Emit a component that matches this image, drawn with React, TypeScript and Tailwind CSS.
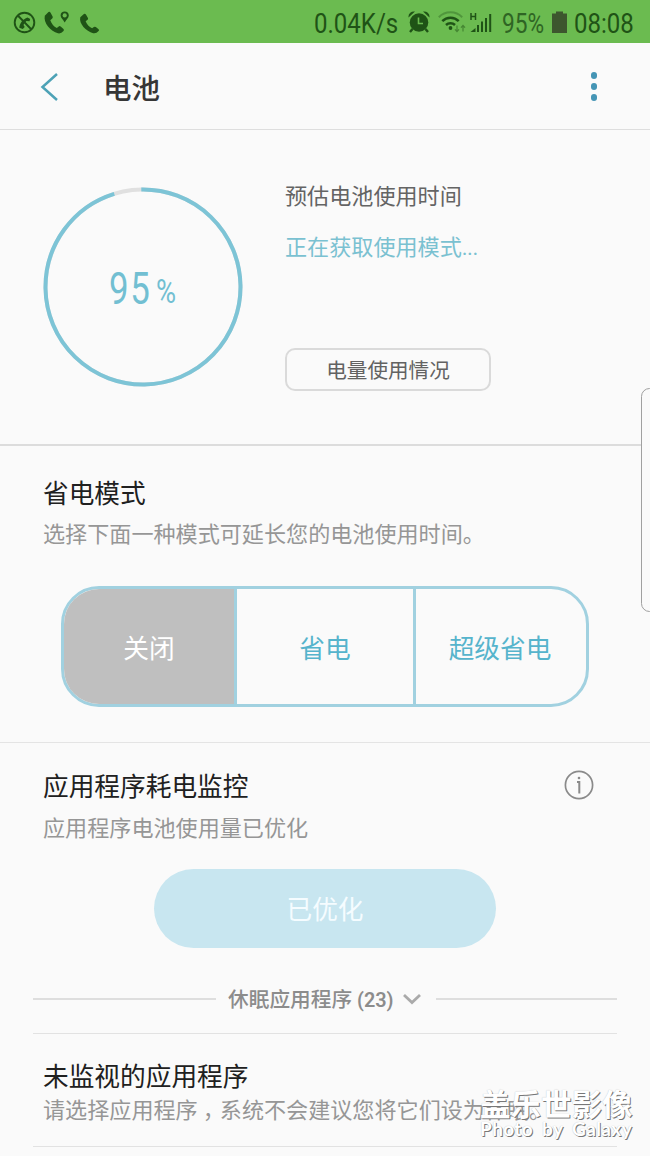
import type { ReactNode } from "react";

const handset =
  "M.8 4.200 4.600.600Q5.800-.2 6.700 1.200L8.800 4.900Q9.300 6 8.400 6.800L6.400 8.500C7.800 12 10 14.600 13.100 16.100L15 14.600Q16 13.900 17 14.700L19.900 17.100Q20.800 18.100 19.900 19.100 17.500 22 14.300 21.400C6.800 19.800-.8 11 .8 4.200z";

function StatusBar() {
  return (
    <div className="flex h-[43px] items-center bg-[#6bbb50] pl-[13px] pr-4 text-[#1f5316]">
      {/* Notifications */}
      <svg className="h-6 w-[88px] shrink-0" viewBox="0 0 88 24" fill="currentColor">
        <circle cx="11.500" cy="12.500" r="9.800" fill="none" stroke="currentColor" strokeWidth="1.900" />
        <path d="M4.800 5.500 18.500 19.500" stroke="currentColor" strokeWidth="1.900" />
        <path d="M6.300 17.800c.4-4.600 3.500-8.600 8.200-10.300l2.700 1.500-.7 2.200-3-.2c-1.500 1.100-2.500 2.500-3 4.100l1.200 2-1.900 2z" />
        <path d={handset} transform="translate(31 1.500) scale(.98 1.020)" />
        <path d="M51.700 1.500c2.400 0 4.100 1.600 4.100 3.900 0 2.400-2.600 4.200-4.100 7-1.500-2.800-4.100-4.600-4.100-7 0-2.300 1.700-3.900 4.100-3.900z" />
        <circle cx="51.700" cy="5.400" r="2.100" fill="#6bbb50" />
        <path d={handset} transform="translate(66.500 3.500) scale(.96 .92)" />
      </svg>

      <div className="ml-auto flex items-center text-[27px] leading-[43px]">
        <div className="mt-[5px] w-[84px] whitespace-nowrap">
          <span className="inline-block origin-left scale-x-[0.89]">0.04K/s</span>
        </div>
        <svg className="ml-[10px] h-6 w-[22px]" viewBox="0 0 22 24" fill="currentColor">
          <circle cx="11" cy="12.500" r="9.300" />
          <path d="M.5 7.500a5.500 5.500 0 0 1 6.500-6zM21.500 7.500a5.500 5.500 0 0 0-6.500-6z" />
          <path d="m4.500 19-2.500 3M17.500 19l2.500 3" stroke="currentColor" strokeWidth="2.400" />
          <path d="M10.500 7.500v6h4.500" fill="none" stroke="#6bbb50" strokeWidth="1.600" />
        </svg>
        <svg className="ml-2 h-6 w-7" viewBox="0 0 28 24" fill="none" stroke="currentColor">
          <path d="M.8 7.200a16.500 16.500 0 0 1 23.400 0" strokeWidth="2" opacity=".35" />
          <path d="M4.300 11.200a11.500 11.500 0 0 1 16.400 0" strokeWidth="2.500" />
          <path d="M8 15a6.500 6.500 0 0 1 9 0" strokeWidth="2.500" />
          <circle cx="12.500" cy="18" r="1.900" fill="currentColor" stroke="none" />
          <path d="M19 15.500v6m-2-2.200 2 2.200 2-2.200M25 21.500v-6m-2 2.200 2-2.200 2 2.200" strokeWidth="1.200" opacity=".5" />
        </svg>
        <svg className="ml-1 h-6 w-[22px]" viewBox="0 0 22 24" fill="none" stroke="currentColor">
          <path d="M1 3v7M5.500 3v7M1 6.500h4.500" strokeWidth="1.500" />
          <path d="M.5 22h5v-4z" fill="currentColor" stroke="none" />
          <path d="M8 22v-7M12 22V11.500M16 22V8M20.200 22V4" strokeWidth="2" />
        </svg>
        <div className="ml-[10px] mt-[5px] w-[43px] whitespace-nowrap text-[#2f6524]">
          <span className="inline-block origin-left scale-x-[0.84]">95%</span>
        </div>
        <svg className="ml-[7px] h-6 w-[15px]" viewBox="0 0 15 24" fill="#3d562e">
          <path d="M4 1.500h7v2h4V23H0V3.500h4z" />
        </svg>
        <div className="ml-[7px] mt-[5px] w-[60px] whitespace-nowrap">
          <span className="inline-block origin-left scale-x-[0.89]">08:08</span>
        </div>
      </div>
    </div>
  );
}

function Header() {
  return (
    <header className="flex h-[87px] items-center border-b border-[#dedede] pl-[40px] pr-[53px]">
      <svg className="mt-px h-[30px] w-[19px]" viewBox="0 0 19 30" fill="none" stroke="#4da2b6" strokeWidth="2.500">
        <path d="M17 2 2.500 15 17 28" />
      </svg>
      <h1 className="ml-[44px] mt-[7px] text-[28.500px] font-medium leading-[42px] text-[#363636]">电池</h1>
      <div className="ml-auto mt-px flex flex-col gap-[4.500px]">
        <span className="size-[6.500px] rounded-full bg-[#4595b5]" />
        <span className="size-[6.500px] rounded-full bg-[#4595b5]" />
        <span className="size-[6.500px] rounded-full bg-[#4595b5]" />
      </div>
    </header>
  );
}

function Usage() {
  return (
    <section className="flex h-[316px] border-b-2 border-[#dcdcdc] pl-[42.500px] pt-[57px]">
      <div className="relative size-[200px]">
        <svg className="size-full rotate-[-91deg]" viewBox="0 0 200 200" fill="none" strokeWidth="4">
          <circle cx="100" cy="100" r="97.500" stroke="#e0e0e0" />
          <circle cx="100" cy="100" r="97.500" stroke="#7dc4d6" pathLength="100" strokeDasharray="95.500 4.500" />
        </svg>
        <div className="absolute inset-0 text-[#72bfd2]">
          <span className="absolute left-[66px] top-[77px] origin-left scale-x-[0.8] text-[43.500px] leading-[52px] tracking-[2px]">
            95
          </span>
          <span className="absolute left-[113px] top-[84px] origin-left scale-x-[0.83] text-[33px] leading-[42px]">%</span>
        </div>
      </div>
      <div className="ml-[42.500px] -mt-[7px] text-[22.100px] leading-8">
        <p className="text-[#646464]">预估电池使用时间</p>
        <p className="mt-[19px] text-[#7ac1d1]">
          正在获取使用模式<span className="tracking-[-0.500px]">...</span>
        </p>
        <button className="mt-[85px] block h-[43px] w-[206px] rounded-[10px] border-2 border-[#dadada] pt-0.5 text-[20.600px] leading-8 text-[#626262]">
          电量使用情况
        </button>
      </div>
    </section>
  );
}

function Title({ children }: { children: ReactNode }) {
  return <h2 className="text-[25.700px] leading-[38px] text-[#202020]">{children}</h2>;
}

function PowerModes() {
  return (
    <section className="h-[297px] border-b border-[#e4e4e4] px-[43px] pt-[29px]">
      <Title>省电模式</Title>
      <p className="mt-[5px] text-[22.100px] leading-8 text-[#969696]">选择下面一种模式可延长您的电池使用时间。</p>
      <div className="ml-[18px] mt-[36px] flex h-[121px] w-[528px] overflow-hidden rounded-[38px] border-[3px] border-[#a1d1e0] text-[25.700px] text-[#56b4cc]">
        <button className="w-[173px] border-r-[3px] border-[#a1d1e0] bg-[#bfbfbf] pt-1.5 text-white">关闭</button>
        <button className="w-[179px] border-r-[3px] border-[#a1d1e0] pt-1.5">省电</button>
        <button className="flex-1 pt-1.5 pr-0.5">超级省电</button>
      </div>
    </section>
  );
}

function AppMonitor() {
  return (
    <section className="pt-[25px]">
      <div className="flex items-center pl-[43px] pr-14">
        <Title>应用程序耗电监控</Title>
        <svg className="-mt-[5px] ml-auto size-[30px]" viewBox="0 0 30 30" fill="none" stroke="#8a8a8a">
          <circle cx="15" cy="15" r="13.600" strokeWidth="1.700" />
          <path d="M13 12h2.300v11.500" strokeWidth="2" />
          <circle cx="15" cy="8" r="1.300" fill="#8a8a8a" stroke="none" />
        </svg>
      </div>
      <p className="mt-[6px] pl-[43px] text-[22.100px] leading-8 text-[#969696]">应用程序电池使用量已优化</p>
      <button className="mx-auto mt-[25px] block h-[79px] w-[342px] rounded-full bg-[#c8e6f0] pt-1 text-[25.700px] text-[#f5fcff]">
        已优化
      </button>

      <div className="mx-[33px] mt-[35px] flex h-8 items-center text-[20.700px] font-medium leading-8 text-[#8c8c8c]">
        <span className="h-[1.500px] w-[183px] bg-[#dedede]" />
        <span className="ml-3 mt-0.5 whitespace-nowrap">休眠应用程序</span>
        <span className="ml-[5px] mt-0.5 w-[37px] origin-left scale-x-[0.96] font-semibold">(23)</span>
        <svg className="ml-2 h-3 w-5" viewBox="0 0 20 12" fill="none" stroke="#aaaaaa" strokeWidth="2.800">
          <path d="m2 2 8 7.500L18 2" />
        </svg>
        <span className="ml-auto h-[1.500px] w-[181px] bg-[#dedede]" />
      </div>

      <div className="mx-[33px] mt-[18px] h-[114px] overflow-hidden border-y border-[#e2e2e2] px-[10px] pt-6">
        <Title>未监视的应用程序</Title>
        <p className="-mt-0.5 whitespace-nowrap text-[22.100px] leading-8 text-[#969696]">
          请选择应用程序<span className="-mr-[5px] pl-[5px]">，</span>系统不会建议您将它们设为休眠。
        </p>
      </div>
    </section>
  );
}

export default function App() {
  return (
    <div
      lang="zh-CN"
      className="relative h-[1156px] w-[650px] overflow-hidden bg-[#fafafa] font-['Roboto','Noto_Sans_CJK_SC',sans-serif]"
    >
      <StatusBar />
      <Header />
      <Usage />
      <PowerModes />
      <AppMonitor />

      {/* Edge panel handle */}
      <div className="absolute -right-2 top-[388px] h-[224px] w-[17px] rounded-[9px] border border-[#a0a0a0] bg-[#fafafa]" />

      {/* Photo stamp */}
      <div className="absolute left-[480px] top-[1088px] whitespace-nowrap text-white [text-shadow:1px_1px_0.500px_#777,0_0_1px_#bbb]">
        <p className="text-[30.500px] font-bold leading-[36px]">盖乐世影像</p>
        <p className="-mt-[7px] font-['Lato'] text-[19px] font-bold leading-6 tracking-[0.400px] [word-spacing:4px]">
          Photo by Galaxy
        </p>
      </div>
    </div>
  );
}
